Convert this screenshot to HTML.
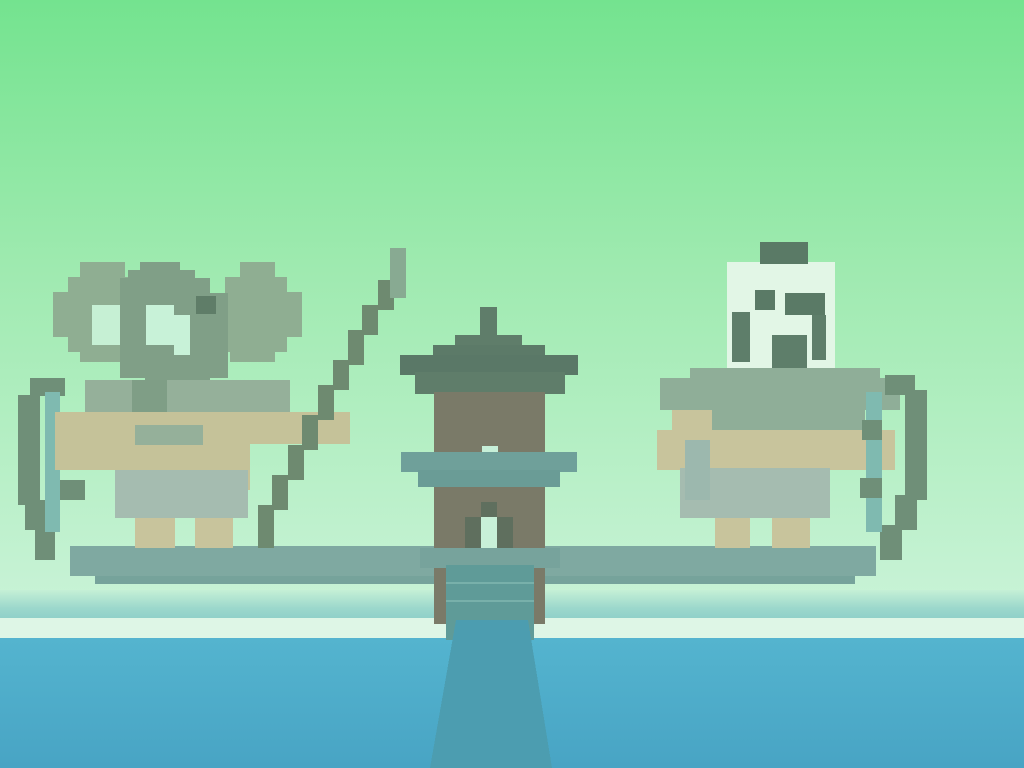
<!DOCTYPE html>
<html><head><meta charset="utf-8"><style>
html,body{margin:0;padding:0;width:1024px;height:768px;overflow:hidden}
svg{display:block}
</style></head><body>
<svg width="1024" height="768" viewBox="0 0 1024 768" xmlns="http://www.w3.org/2000/svg" shape-rendering="crispEdges">
<defs>
<linearGradient id="sky" x1="0" y1="0" x2="0" y2="1">
<stop offset="0" stop-color="#74e38f"/>
<stop offset="0.45" stop-color="#9feab0"/>
<stop offset="1" stop-color="#c8f3d6"/>
</linearGradient>
<linearGradient id="haze" x1="0" y1="0" x2="0" y2="1">
<stop offset="0" stop-color="#c5f0d6"/>
<stop offset="0.6" stop-color="#9cd8cc"/>
<stop offset="1" stop-color="#8ecfc8"/>
</linearGradient>
<linearGradient id="sea" x1="0" y1="0" x2="0" y2="1">
<stop offset="0" stop-color="#54b4cf"/>
<stop offset="1" stop-color="#48a4c4"/>
</linearGradient>
</defs>
<rect width="1024" height="600" fill="url(#sky)"/>
<rect y="590" width="1024" height="30" fill="url(#haze)"/>
<rect y="618" width="1024" height="21" fill="#def6e6"/>
<rect y="638" width="1024" height="130" fill="url(#sea)"/>

<!-- platform -->
<rect x="70" y="546" width="806" height="30" fill="#7fa9a1"/>
<rect x="95" y="576" width="760" height="8" fill="#76a39b"/>

<!-- left bow -->
<path d="M30 378h35v18h-35zM18 395h22v110h-22zM25 500h22v30h-22zM35 525h20v35h-20z" fill="#6f8f78"/>
<path d="M45 392h15v140h-15z" fill="#7fbab0"/>
<path d="M55 420h20v20h-20zM60 480h25v20h-25z" fill="#6f8f78"/>
<!-- left figure hair blobs (stepped) -->
<path d="M92 262h33v15h-0v0h10v85h-55v-10h-12v-15h-15v-45h15v-15h12v-15z" fill="#8fae92"/>
<path d="M240 262h35v15h12v15h15v45h-15v15h-12v10h-45v-10h-5v-75h15z" fill="#8fae92"/>
<path d="M140 262h40v8h15v8h15v15h18v85h-18v30h-65v-30h-25v-100h8v-8h12z" fill="#809f87"/>
<rect x="92" y="305" width="28" height="40" fill="#c6f0d4"/>
<path d="M146 305h28v10h16v40h-16v-10h-28z" fill="#c8f2d8"/>
<rect x="196" y="296" width="20" height="18" fill="#5f7d68"/>
<rect x="85" y="380" width="205" height="50" fill="#95b09a"/>
<rect x="132" y="380" width="35" height="50" fill="#7f9e86"/>
<rect x="55" y="412" width="295" height="32" fill="#c5c299"/>
<rect x="55" y="440" width="60" height="30" fill="#c5c299"/>
<rect x="115" y="425" width="135" height="65" fill="#c5c299"/>
<rect x="135" y="425" width="68" height="20" fill="#95b09a"/>
<rect x="115" y="470" width="133" height="48" fill="#a5bcb0"/>
<rect x="135" y="518" width="40" height="30" fill="#c8c49c"/>
<rect x="195" y="518" width="38" height="30" fill="#c8c49c"/>
<!-- staff -->
<path d="M390 248h16v35h-16zM378 280h16v30h-16zM362 305h16v30h-16zM348 330h16v35h-16zM333 360h16v30h-16zM318 385h16v35h-16zM302 415h16v35h-16zM288 445h16v35h-16zM272 475h16v35h-16zM258 505h16v43h-16z" fill="#6e8a70"/>
<rect x="390" y="248" width="16" height="50" fill="#88aa92"/>

<!-- tower -->
<rect x="480" y="307" width="17" height="40" fill="#5f7d6a"/>
<rect x="455" y="335" width="67" height="15" fill="#5f7d6a"/>
<rect x="433" y="345" width="112" height="12" fill="#5c7a68"/>
<rect x="400" y="355" width="178" height="20" fill="#5a7867"/>
<rect x="415" y="372" width="150" height="22" fill="#5f7d6a"/>
<rect x="434" y="392" width="111" height="232" fill="#7a7a68"/>
<rect x="482" y="446" width="16" height="8" fill="#c6efd8"/>
<rect x="401" y="452" width="176" height="20" fill="#6fa09a"/>
<rect x="418" y="470" width="142" height="17" fill="#6a9c96"/>
<rect x="481" y="502" width="16" height="15" fill="#5f6f5e"/>
<rect x="465" y="517" width="16" height="48" fill="#5f6f5e"/>
<rect x="497" y="517" width="16" height="48" fill="#5f6f5e"/>
<rect x="481" y="517" width="16" height="48" fill="#c8f0d8"/>
<rect x="420" y="548" width="140" height="20" fill="#77a39c"/>
<rect x="446" y="565" width="88" height="75" fill="#5f9b98"/>
<rect x="446" y="582" width="88" height="2" fill="#78b0aa"/>
<rect x="446" y="600" width="88" height="2" fill="#78b0aa"/>
<path d="M456 620L528 620L552 768L430 768Z" fill="#4c9db0"/>

<!-- right figure -->
<rect x="727" y="262" width="108" height="116" fill="#e2f6e6"/>
<rect x="760" y="242" width="48" height="22" fill="#5a7a66"/>
<rect x="755" y="290" width="20" height="20" fill="#5a7a66"/>
<rect x="785" y="293" width="40" height="22" fill="#5a7a66"/>
<rect x="732" y="312" width="18" height="50" fill="#5e7e6a"/>
<rect x="772" y="335" width="35" height="40" fill="#5e7e6a"/>
<rect x="812" y="315" width="14" height="45" fill="#5e7e6a"/>
<rect x="690" y="368" width="190" height="12" fill="#8fae98"/>
<rect x="660" y="378" width="240" height="32" fill="#8fae98"/>
<rect x="705" y="405" width="160" height="30" fill="#8fae98"/>
<rect x="657" y="430" width="238" height="40" fill="#c8c49c"/>
<rect x="672" y="410" width="40" height="25" fill="#c8c49c"/>
<rect x="680" y="468" width="150" height="50" fill="#a5bcb0"/>
<rect x="685" y="440" width="25" height="60" fill="#9cb8ae"/>
<rect x="715" y="518" width="35" height="30" fill="#c8c49c"/>
<rect x="772" y="518" width="38" height="30" fill="#c8c49c"/>
<!-- right bow -->
<path d="M885 375h30v20h-30zM905 390h22v110h-22zM895 495h22v35h-22zM880 525h22v35h-22z" fill="#6f8f78"/>
<path d="M866 392h16v140h-16z" fill="#7fbab0"/>
<path d="M862 420h20v20h-20zM860 478h22v20h-22z" fill="#6f8f78"/>
</svg>
</body></html>
